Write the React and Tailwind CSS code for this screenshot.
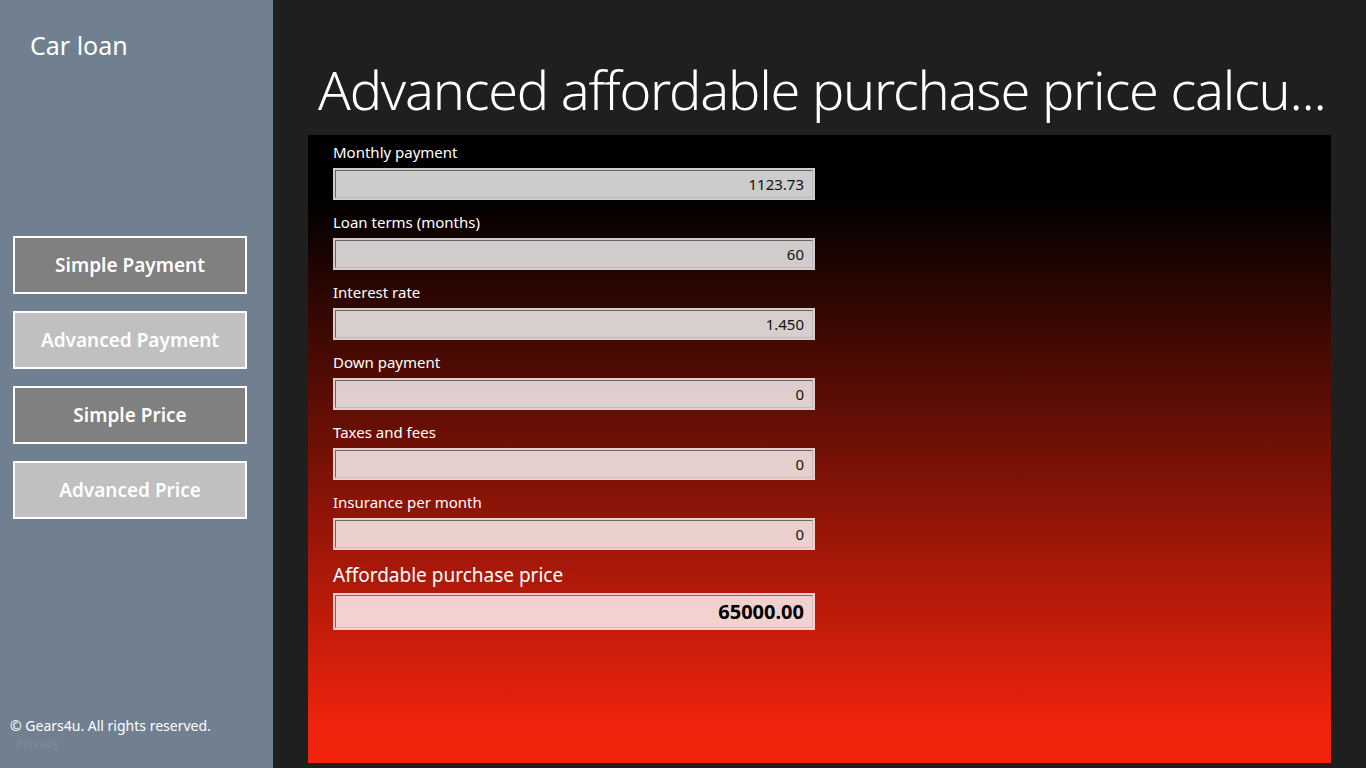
import React from "react";

const fields = [
  { label: "Monthly payment", value: "1123.73" },
  { label: "Loan terms (months)", value: "60" },
  { label: "Interest rate", value: "1.450" },
  { label: "Down payment", value: "0" },
  { label: "Taxes and fees", value: "0" },
  { label: "Insurance per month", value: "0" },
];

const menu = [
  { label: "Simple Payment", dark: true },
  { label: "Advanced Payment", dark: false },
  { label: "Simple Price", dark: true },
  { label: "Advanced Price", dark: false },
];

function Box({ value, big }) {
  return (
    <div className={`w-[482px] bg-white/80 p-[2px] ${big ? "h-[37px]" : "h-[32px]"}`}>
      <div className="h-full flex items-center justify-end pr-[8px] border-t border-l border-black/50 border-r border-b border-r-black/10 border-b-black/10">
        <span className={big ? "text-[20px] font-bold text-black" : "text-[15px] text-[#111]"}>{value}</span>
      </div>
    </div>
  );
}

export default function App() {
  return (
    <div
      className="flex w-[1366px] h-[768px] overflow-hidden"
      style={{ fontFamily: '"Noto Sans", "Open Sans", sans-serif' }}
    >
      <aside className="w-[273px] shrink-0 bg-[#708090] flex flex-col">
        <div className="pl-[30px] pt-[27px] text-[25px] leading-[36px] text-white">Car loan</div>
        <nav className="mt-[173px] pl-[13px] flex flex-col gap-[17px]">
          {menu.map((m) => (
            <button
              key={m.label}
              className={`w-[234px] h-[58px] border-2 border-white text-white text-[19px] font-semibold ${
                m.dark ? "bg-[#808080]" : "bg-[#c0c0c0]"
              }`}
            >
              {m.label}
            </button>
          ))}
        </nav>
        <div className="mt-auto pl-[10px] pb-[16px]">
          <div className="text-[14px] leading-[20px] text-white">© Gears4u. All rights reserved.</div>
          <div className="pl-[6px] text-[12px] leading-[16px] font-bold text-[#7b8897]">Privacy</div>
        </div>
      </aside>

      <main className="flex-1 min-w-0 bg-[#1f1f1f] flex flex-col pl-[35px] pr-[35px]">
        <h1 className="h-[135px] shrink-0 pl-[10px] pt-[49px] text-[54px] leading-[80px] font-light text-white whitespace-nowrap tracking-[-1.2px]">
          Advanced affordable purchase price calcu...
        </h1>
        <section className="h-[628px] bg-[linear-gradient(to_bottom,#000_10%,#f2230c_95%)] pl-[25px] pt-[7px]">
          {fields.map((f) => (
            <div key={f.label} className="mb-[12px]">
              <div className="text-[15px] leading-[20px] text-white mb-[6px]">{f.label}</div>
              <Box value={f.value} />
            </div>
          ))}
          <div className="text-[19px] leading-[26px] text-white mb-[5px]">Affordable purchase price</div>
          <Box value="65000.00" big />
        </section>
        <div className="h-[5px]" />
      </main>
    </div>
  );
}
